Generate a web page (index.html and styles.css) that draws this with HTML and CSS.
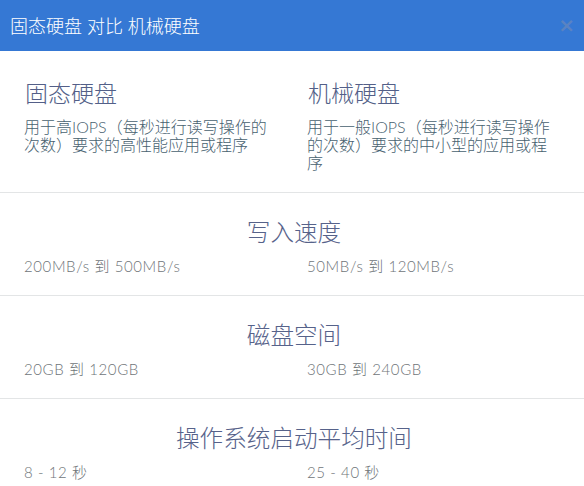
FILE: index.html
```html
<!DOCTYPE html>
<html lang="zh-CN">
<head>
<meta charset="utf-8">
<title>固态硬盘 对比 机械硬盘</title>
<link rel="stylesheet" href="styles.css">
</head>
<body>
<div class="modal">
  <div class="modal-header">
    <h4 class="modal-title">固态硬盘 对比 机械硬盘</h4>
    <span class="close" aria-label="关闭">&times;</span>
  </div>
  <div class="section intro">
    <div class="cols">
      <div class="col">
        <h3 class="kind">固态硬盘</h3>
        <p class="desc">用于高IOPS（每秒进行读写操作的次数）要求的高性能应用或程序</p>
      </div>
      <div class="col">
        <h3 class="kind">机械硬盘</h3>
        <p class="desc">用于一般IOPS（每秒进行读写操作的次数）要求的中小型的应用或程序</p>
      </div>
    </div>
  </div>
  <div class="section">
    <h3 class="metric">写入速度</h3>
    <div class="cols">
      <div class="value">200MB/s 到 500MB/s</div>
      <div class="value">50MB/s 到 120MB/s</div>
    </div>
  </div>
  <div class="section">
    <h3 class="metric">磁盘空间</h3>
    <div class="cols">
      <div class="value">20GB 到 120GB</div>
      <div class="value">30GB 到 240GB</div>
    </div>
  </div>
  <div class="section last">
    <h3 class="metric">操作系统启动平均时间</h3>
    <div class="cols">
      <div class="value">8 - 12 秒</div>
      <div class="value">25 - 40 秒</div>
    </div>
  </div>
</div>
</body>
</html>
```
FILE: styles.css
```css
html, body {
  margin: 0;
  padding: 0;
  background: #ffffff;
}
body {
  font-family: Lato, "Noto Sans CJK SC", sans-serif;
  font-weight: 300;
  overflow: hidden;
}
.modal {
  width: 584px;
}
.modal-header {
  height: 51px;
  background: #3578d4;
  display: flex;
  align-items: center;
  justify-content: space-between;
  padding: 0 9px 0 10px;
  box-sizing: border-box;
}
.modal-title {
  margin: 0;
  color: #ffffff;
  font-family: Lato, "Noto Sans CJK SC", sans-serif;
  font-weight: 300;
  font-size: 18px;
  line-height: 24px;
}
.close {
  color: #5a83c2;
  font-family: "DejaVu Sans", sans-serif;
  font-weight: 700;
  font-size: 20px;
  line-height: 20px;
  margin-top: -2px;
}
.section {
  padding: 25px 20px 19px 24px;
  border-bottom: 1px solid #e3e5e6;
}
.section.intro {
  padding-top: 28px;
  padding-bottom: 20px;
}
.section.last {
  border-bottom: none;
}
.cols {
  display: grid;
  grid-template-columns: 283px 1fr;
}
.col {
  max-width: 250px;
}
.kind {
  margin: 0 0 11px 1px;
  font-size: 23px;
  line-height: 28px;
  font-weight: 300;
  color: #535f88;
}
.desc {
  margin: 0;
  font-size: 16px;
  line-height: 18px;
  color: #47616f;
}
.metric {
  margin: 0 0 10px 0;
  text-align: center;
  font-size: 23.6px;
  line-height: 28px;
  font-weight: 300;
  color: #56628a;
}
.value {
  font-size: 15px;
  line-height: 20px;
  color: #6f7579;
  letter-spacing: 0.6px;
}
```
